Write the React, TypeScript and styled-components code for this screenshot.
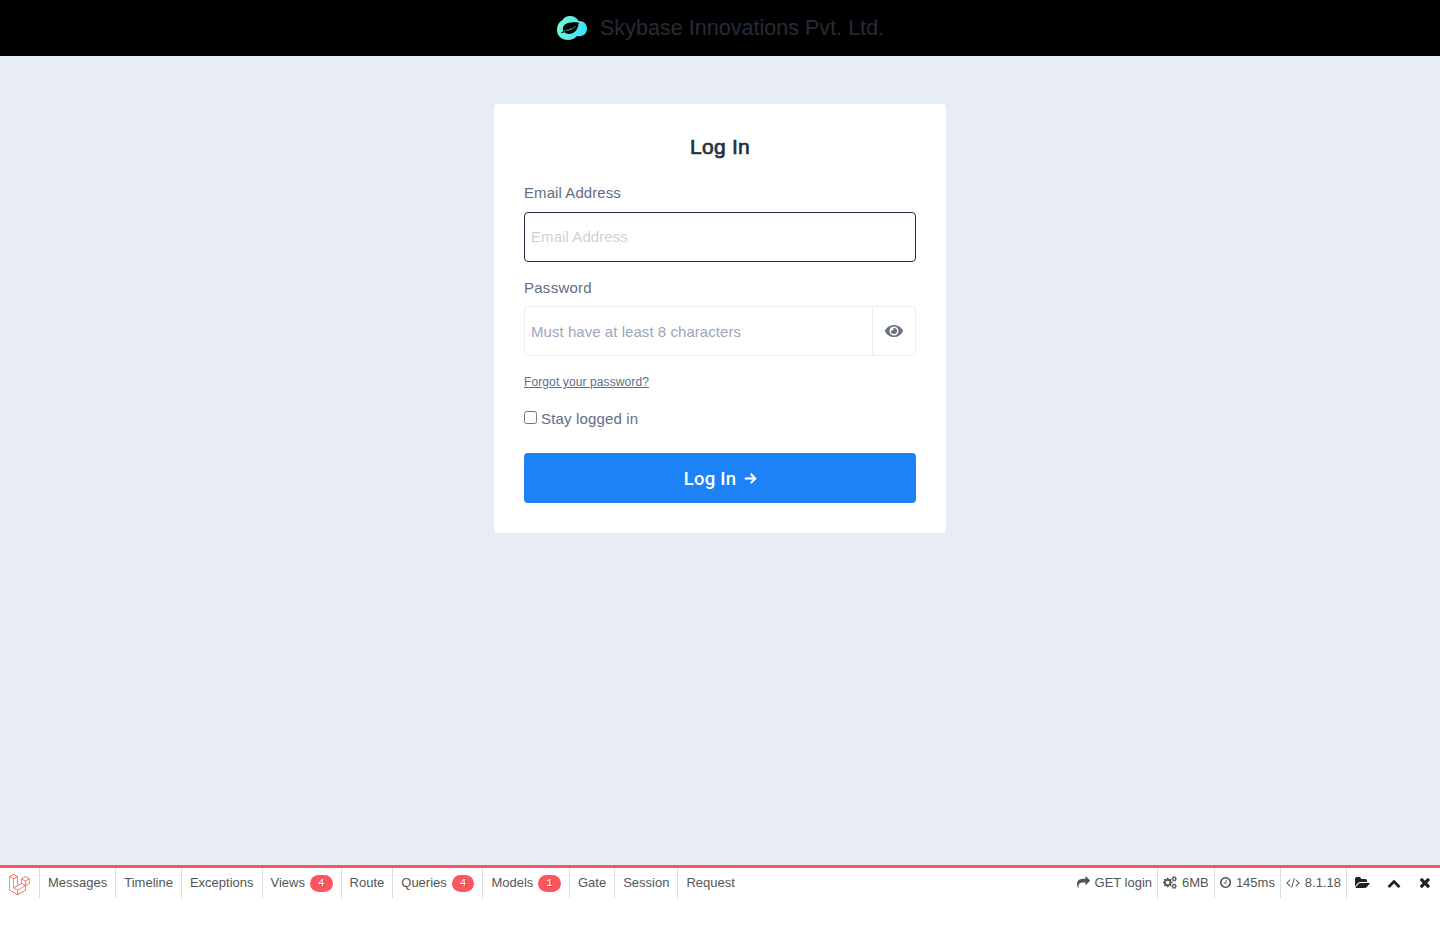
import React from 'react';
import styled, { createGlobalStyle } from 'styled-components';
import { FaEye } from 'react-icons/fa';
import { FaArrowRight } from 'react-icons/fa6';
import { SiLaravel } from 'react-icons/si';

const GlobalStyle = createGlobalStyle`
  *, *::before, *::after { box-sizing: border-box; }
  body {
    margin: 0;
    background: #fff;
    font-family: "Liberation Sans", Arial, sans-serif;
    color: #616e88;
  }
`;

const Page = styled.div`
  height: 932px;
  display: flex;
  flex-direction: column;
`;

const Header = styled.header`
  height: 56px;
  flex: none;
  background: #000;
  display: flex;
  align-items: center;
  justify-content: center;
  gap: 12px;
`;

const Brand = styled.span`
  font-size: 21.5px;
  line-height: 28px;
  letter-spacing: 0.03px;
  color: #242c38;
  white-space: nowrap;
  width: 284px;
`;

const Main = styled.main`
  flex: none;
  height: 809px;
  background: #e8edf5;
  padding-top: 48px;
  display: flex;
  justify-content: center;
  align-items: flex-start;
`;

const Card = styled.form`
  width: 452px;
  height: 429px;
  border-radius: 4px;
  background: #fff;
  padding: 28px 30px 30px;
  display: flex;
  flex-direction: column;
`;

const Title = styled.h1`
  margin: 0 0 19px;
  font-size: 21px;
  line-height: 30px;
  font-weight: 400;
  letter-spacing: 0.25px;
  text-align: center;
  color: #242f3e;
  -webkit-text-stroke: 0.7px #242f3e;
`;

const Label = styled.label`
  height: 24px;
  line-height: 24px;
  font-size: 15px;
  letter-spacing: 0.08px;
  margin-bottom: 7px;
`;

const PasswordLabel = styled(Label)`
  margin-top: 14px;
  margin-bottom: 6px;
  letter-spacing: 0.26px;
`;

const Input = styled.input<{ $active?: boolean }>`
  width: 100%;
  height: 50px;
  min-width: 0;
  flex: ${p => (p.$active ? 'none' : '1')};
  border: ${p => (p.$active ? '1px solid #242b3c' : '0')};
  border-radius: 4px;
  padding: ${p => (p.$active ? '0 6px 2px' : '0 6px')};
  font: 15px "Liberation Sans", Arial, sans-serif;
  letter-spacing: ${p => (p.$active ? '0.08px' : '0.05px')};
  outline: none;
  background: transparent;
  &::placeholder { color: ${p => (p.$active ? '#cdd1da' : '#9ba6b8')}; opacity: 1; }
`;

const InputGroup = styled.div`
  height: 50px;
  display: flex;
  align-items: center;
  border: 1px solid #e8edf5;
  border-radius: 4px;
`;

const Reveal = styled.button`
  width: 43px;
  height: 48px;
  padding: 0;
  border: 0;
  border-left: 1px solid #e8edf5;
  background: transparent;
  color: #69737e;
  display: flex;
  align-items: center;
  justify-content: center;
`;

const Forgot = styled.a`
  align-self: flex-start;
  margin-top: 17px;
  font-size: 12px;
  line-height: 18px;
  letter-spacing: 0.11px;
  text-decoration: underline;
`;

const Remember = styled.label`
  margin-top: 16px;
  height: 22px;
  display: flex;
  align-items: center;
  gap: 4px;
  font-size: 15px;
  letter-spacing: 0.15px;
  input { width: 13px; height: 13px; margin: 0 0 1px; }
`;

const Submit = styled.button`
  margin-top: 24px;
  height: 50px;
  flex: none;
  border: 0;
  border-radius: 4px;
  background: #1e82f7;
  color: #fff;
  display: flex;
  align-items: center;
  justify-content: center;
  gap: 8px;
  padding: 1px 0 0 1px;
  font: 500 18.5px/26px Roboto, sans-serif;
  letter-spacing: 0.25px;
  svg { stroke: currentColor; stroke-width: 22px; margin-bottom: 1px; }
`;

const DebugBar = styled.footer`
  height: 33px;
  flex: none;
  border-top: 3px solid #fb5560;
  display: flex;
  font-size: 13px;
  line-height: 30px;
  color: #555;
`;

const Logo = styled.span`
  width: 39px;
  padding: 6px 0 0 9px;
  color: #ff4f43;
  svg { display: block; }
`;

const Tab = styled.a`
  height: 30px;
  padding: 0 8px;
  border-left: 1px solid #ddd;
  display: flex;
  align-items: center;
  gap: 5px;
  white-space: nowrap;
`;

const Badge = styled.span`
  height: 17px;
  padding: 0 8px;
  border-radius: 9px;
  background: #fb5560;
  color: #fff;
  font: 11px/16px "Liberation Mono", monospace;
  text-shadow: 1px 1px 0 rgba(0, 0, 0, 0.3);
  margin-top: 1px;
`;

const Status = styled.div`
  margin-left: auto;
  display: flex;
`;

const Stat = styled.span<{ $first?: boolean }>`
  height: 30px;
  padding: 0 5px;
  border-left: ${p => (p.$first ? '0' : '1px solid #ddd')};
  display: flex;
  align-items: center;
  gap: 5px;
  white-space: nowrap;
  svg { margin-bottom: 1px; }
`;

const Controls = styled.div`
  width: 94px;
  border-left: 1px solid #ddd;
  display: flex;
  align-items: center;
  padding-left: 8px;
  color: #222;
`;

const Control = styled.button<{ $width: number }>`
  width: ${p => p.$width}px;
  height: 30px;
  padding: 0 0 1px;
  border: 0;
  background: none;
  color: inherit;
  display: flex;
  align-items: center;
  svg { display: block; }
`;

const ICONS = {
  share: { w: 1792, d: 'M1792 640q0 26-19 45l-512 512q-19 19-45 19t-45-19-19-45v-256h-224q-98 0-175.5 6t-154 21.5-133 42.5-105.5 69.5-80 101-48.5 138.5-17.5 181q0 55 5 123 0 6 2.5 23.5t2.5 26.5q0 15-8.5 25t-23.5 10q-16 0-28-17-7-9-13-22t-13.5-30-10.5-24q-127-285-127-451 0-199 53-333 162-403 875-403h224v-256q0-26 19-45t45-19 45 19l512 512q19 19 19 45z' },
  cogs: { w: 1920, d: 'M896 896q0-106-75-181t-181-75-181 75-75 181 75 181 181 75 181-75 75-181zm768 512q0-52-38-90t-90-38-90 38-38 90q0 53 37.5 90.5t90.5 37.5 90.5-37.5 37.5-90.5zm0-1024q0-52-38-90t-90-38-90 38-38 90q0 53 37.5 90.5t90.5 37.5 90.5-37.5 37.5-90.5zm-384 421v185q0 10-7 19.5t-16 10.5l-155 24q-11 35-32 76 34 48 90 115 7 11 7 20 0 12-7 19-23 30-82.5 89.5t-78.5 59.5q-11 0-21-7l-115-90q-37 19-77 31-11 108-23 155-7 24-30 24h-186q-11 0-20-7.5t-10-17.5l-23-153q-34-10-75-31l-118 89q-7 7-20 7-11 0-21-8-144-133-144-160 0-9 7-19 10-14 41-53t47-61q-23-44-35-82l-152-24q-10-1-17-9.5t-7-19.5v-185q0-10 7-19.5t16-10.5l155-24q11-35 32-76-34-48-90-115-7-11-7-20 0-12 7-20 22-30 82-89t79-59q11 0 21 7l115 90q34-18 77-32 11-108 23-154 7-24 30-24h186q11 0 20 7.5t10 17.5l23 153q34 10 75 31l118-89q8-7 20-7 11 0 21 8 144 133 144 160 0 8-7 19-12 16-42 54t-45 60q23 48 34 82l152 23q10 2 17 10.5t7 19.5zm640 533v140q0 16-149 31-12 27-30 52 51 113 51 138 0 4-4 7-122 71-124 71-8 0-46-47t-52-68q-20 2-30 2t-30-2q-14 21-52 68t-46 47q-2 0-124-71-4-3-4-7 0-25 51-138-18-25-30-52-149-15-149-31v-140q0-16 149-31 13-29 30-52-51-113-51-138 0-4 4-7 4-2 35-20t59-34 30-16q8 0 46 46.5t52 67.5q20-2 30-2t30 2q51-71 92-112l6-2q4 0 124 70 4 3 4 7 0 25-51 138 17 23 30 52 149 15 149 31zm0-1024v140q0 16-149 31-12 27-30 52 51 113 51 138 0 4-4 7-122 71-124 71-8 0-46-47t-52-68q-20 2-30 2t-30-2q-14 21-52 68t-46 47q-2 0-124-71-4-3-4-7 0-25 51-138-18-25-30-52-149-15-149-31v-140q0-16 149-31 13-29 30-52-51-113-51-138 0-4 4-7 4-2 35-20t59-34 30-16q8 0 46 46.5t52 67.5q20-2 30-2t30 2q51-71 92-112l6-2q4 0 124 70 4 3 4 7 0 25-51 138 17 23 30 52 149 15 149 31z' },
  clock: { w: 1536, x: 128, d: 'M1024 544v448q0 14-9 23t-23 9h-320q-14 0-23-9t-9-23v-64q0-14 9-23t23-9h224v-352q0-14 9-23t23-9h64q14 0 23 9t9 23zm416 352q0-148-73-273t-198-198-273-73-273 73-198 198-73 273 73 273 198 198 273 73 273-73 198-198 73-273zm224 0q0 209-103 385.5t-279.5 279.5-385.5 103-385.5-103-279.5-279.5-103-385.5 103-385.5 279.5-279.5 385.5-103 385.5 103 279.5 279.5 103 385.5z' },
  code: { w: 1920, x: 64, d: 'M681 1399l-50 50q-10 10-23 10t-23-10l-466-466q-10-10-10-23t10-23l466-466q10-10 23-10t23 10l50 50q10 10 10 23t-10 23l-393 393 393 393q10 10 10 23t-10 23zm591-1067l-373 1291q-4 13-15.5 19.5t-23.5 2.5l-62-17q-13-4-19.5-15.5t-2.5-24.5l373-1291q4-13 15.5-19.5t23.5-2.5l62 17q13 4 19.5 15.5t2.5 24.5zm657 651l-466 466q-10 10-23 10t-23-10l-50-50q-10-10-10-23t10-23l393-393-393-393q-10-10-10-23t10-23l50-50q10-10 23-10t23 10l466 466q10 10 10 23t-10 23z' },
  folder: { w: 1920, d: 'M1879 952q0 31-31 66l-336 396q-43 51-120.5 86.5t-143.5 35.5h-1088q-34 0-60.5-13t-26.5-43q0-31 31-66l336-396q43-51 120.5-86.5t143.5-35.5h1088q34 0 60.5 13t26.5 43zm-343-344v160h-832q-94 0-197 47.5t-164 119.5l-337 396-5 6q0-4-.5-12.5t-.5-12.5v-960q0-92 66-158t158-66h320q92 0 158 66t66 158v32h544q92 0 158 66t66 158z' },
  up: { w: 1792, d: 'M1683 1331l-166 165q-19 19-45 19t-45-19l-531-531-531 531q-19 19-45 19t-45-19l-166-165q-19-19-19-45.5t19-45.5l742-741q19-19 45-19t45 19l742 741q19 19 19 45.5t-19 45.5z' },
  close: { w: 1408, x: 192, d: 'M1490 1322q0 40-28 68l-136 136q-28 28-68 28t-68-28l-294-294-294 294q-28 28-68 28t-68-28l-136-136q-28-28-28-68t28-68l294-294-294-294q-28-28-28-68t28-68l136-136q28-28 68-28t68 28l294 294 294-294q28-28 68-28t68 28l136 136q28 28 28 68t-28 68l-294 294 294 294q28 28 28 68z' },
};

function Icon({ name, size = 13 }: { name: keyof typeof ICONS; size?: number }) {
  const icon: { w: number; x?: number; d: string } = ICONS[name];
  return (
    <svg width={(icon.w / 1792) * size} height={size} viewBox={`${icon.x ?? 0} 0 ${icon.w} 1792`} fill="currentColor">
      <path d={icon.d} />
    </svg>
  );
}

function CloudLogo() {
  return (
    <svg width="32" height="26" viewBox="0 0 32 26">
      <defs>
        <linearGradient id="cloud" x1="0" x2="1" y1="0" y2="0.2">
          <stop offset="0" stopColor="#7af8d6" />
          <stop offset="1" stopColor="#40e1f8" />
        </linearGradient>
      </defs>
      <path fill="url(#cloud)" d="M6 5.500C8 2.200 11 1 14 1c4.200 0 7.200 2 8.600 5 5-.5 8.400 3.200 8.400 7.700 0 5-4.200 8.300-10 7.300-2.200 2.700-5.300 4-9 4-6.500 0-11-4.200-11-10C1 10.500 2.600 7 6 5.500Z" />
      <path fill="#000" d="M23 7.700c-6-.9-11.200-.5-14 1.800-2.100 1.700-2.700 4.200-1.700 6.500L5 17.700l.7.6 2.700-1.100c2.400 2.200 6.500 2.400 9.800 0 3.500-2.500 3.800-6.400 4.800-9.500Z" />
      <path fill="none" stroke="#5ceee7" strokeWidth=".6" d="M7.500 16.400c3-1.900 4.800-1 7.200-1.800 2.200-.8 3-2.400 5.200-3.300M14 14.800l1-1.700" />
    </svg>
  );
}

const TABS: { label: string; count?: number }[] = [
  { label: 'Messages' },
  { label: 'Timeline' },
  { label: 'Exceptions' },
  { label: 'Views', count: 4 },
  { label: 'Route' },
  { label: 'Queries', count: 4 },
  { label: 'Models', count: 1 },
  { label: 'Gate' },
  { label: 'Session' },
  { label: 'Request' },
];

export default function App() {
  return (
    <Page>
      <GlobalStyle />
      <Header>
        <CloudLogo />
        <Brand>Skybase Innovations Pvt. Ltd.</Brand>
      </Header>
      <Main>
        <Card>
          <Title>Log In</Title>
          <Label htmlFor="email">Email Address</Label>
          <Input id="email" $active placeholder="Email Address" />
          <PasswordLabel htmlFor="password">Password</PasswordLabel>
          <InputGroup>
            <Input id="password" type="password" placeholder="Must have at least 8 characters" />
            <Reveal type="button"><FaEye size={18} /></Reveal>
          </InputGroup>
          <Forgot>Forgot your password?</Forgot>
          <Remember><input type="checkbox" />Stay logged in</Remember>
          <Submit type="button">Log In <FaArrowRight size={13} /></Submit>
        </Card>
      </Main>
      <DebugBar>
        <Logo><SiLaravel size={21} /></Logo>
        {TABS.map(t => (
          <Tab key={t.label}>{t.label}{t.count && <Badge>{t.count}</Badge>}</Tab>
        ))}
        <Status>
          <Stat $first><Icon name="share" /> GET login</Stat>
          <Stat><Icon name="cogs" /> 6MB</Stat>
          <Stat><Icon name="clock" /> 145ms</Stat>
          <Stat><Icon name="code" /> 8.1.18</Stat>
          <Controls>
            <Control $width={32}><Icon name="folder" size={14} /></Control>
            <Control $width={32}><Icon name="up" size={14} /></Control>
            <Control $width={20}><Icon name="close" size={15} /></Control>
          </Controls>
        </Status>
      </DebugBar>
    </Page>
  );
}
